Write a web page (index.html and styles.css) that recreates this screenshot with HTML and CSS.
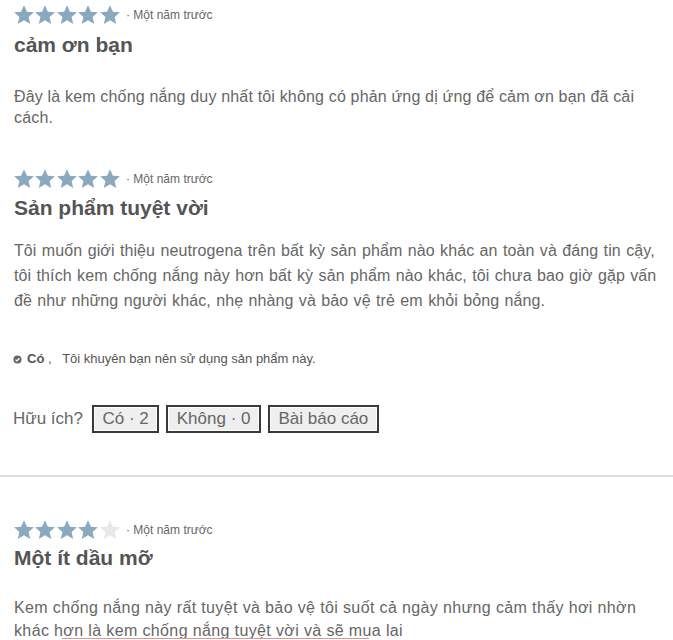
FILE: index.html
```html
<!DOCTYPE html>
<html lang="vi">
  <head>
    <meta charset="UTF-8">
    <title>Đánh giá sản phẩm</title>
    <link rel="stylesheet" href="styles.css">
  </head>
  <body>
    <svg width="0" height="0" class="defs">
      <defs>
        <path id="star" d="M11 1.2l2.9 6.5 7 .6-5.3 4.7 1.6 6.9L11 16.3l-6.2 3.6 1.6-6.9L1.1 8.3l7-.6z"/>
      </defs>
    </svg>

    <div class="review first">
      <div class="meta">
        <span class="stars">
          <svg class="star on"><use href="#star"/></svg><svg class="star on"><use href="#star"/></svg><svg class="star on"><use href="#star"/></svg><svg class="star on"><use href="#star"/></svg><svg class="star on"><use href="#star"/></svg>
        </span>
        <span class="date">· Một năm trước</span>
      </div>
      <h2 class="title">cảm ơn bạn</h2>
      <p class="text">Đây là kem chống nắng duy nhất tôi không có phản ứng dị ứng để cảm ơn bạn đã cải cách.</p>
    </div>

    <div class="review second">
      <div class="meta">
        <span class="stars">
          <svg class="star on"><use href="#star"/></svg><svg class="star on"><use href="#star"/></svg><svg class="star on"><use href="#star"/></svg><svg class="star on"><use href="#star"/></svg><svg class="star on"><use href="#star"/></svg>
        </span>
        <span class="date">· Một năm trước</span>
      </div>
      <h2 class="title">Sản phẩm tuyệt vời</h2>
      <p class="text">Tôi muốn giới thiệu neutrogena trên bất kỳ sản phẩm nào khác an toàn và đáng tin cậy, tôi thích kem chống nắng này hơn bất kỳ sản phẩm nào khác, tôi chưa bao giờ gặp vấn đề như những người khác, nhẹ nhàng và bảo vệ trẻ em khỏi bỏng nắng.</p>
      <p class="recommend">
        <svg class="check" viewBox="0 0 10 10"><circle cx="5" cy="5" r="4.5"/><path d="M2.8 5.1l1.5 1.5 2.9-3"/></svg>
        <b>Có</b>&nbsp;,&nbsp;&nbsp; Tôi khuyên bạn nên sử dụng sản phẩm này.
      </p>
      <div class="helpful">
        <span>Hữu ích?</span>
        <button>Có · 2</button>
        <button>Không · 0</button>
        <button>Bài báo cáo</button>
      </div>
    </div>

    <hr class="divider">

    <div class="review third">
      <div class="meta">
        <span class="stars">
          <svg class="star on"><use href="#star"/></svg><svg class="star on"><use href="#star"/></svg><svg class="star on"><use href="#star"/></svg><svg class="star on"><use href="#star"/></svg><svg class="star"><use href="#star"/></svg>
        </span>
        <span class="date">· Một năm trước</span>
      </div>
      <h2 class="title">Một ít dầu mỡ</h2>
      <p class="text">Kem chống nắng này rất tuyệt và bảo vệ tôi suốt cả ngày nhưng cảm thấy hơi nhờn khác hơn là kem chống nắng tuyệt vời và sẽ mua lai</p>
      <div class="more"></div>
    </div>
  </body>
</html>
```

FILE: styles.css
```css
body {
  font-family: "Liberation Sans", Arial, sans-serif;
  background-color: #fff;
  margin: 0;
  padding: 0 6px 0 13px;
  color: #666;
  overflow: hidden;
}
.defs {
  position: absolute;
}
.review {
  display: flex;
  flex-direction: column;
}
.first {
  padding-top: 4px;
}
.second {
  margin-top: 40px;
}
.third {
  margin-top: 42px;
}
.meta {
  display: flex;
  align-items: center;
  height: 22px;
}
.stars {
  display: flex;
}
.star {
  width: 22px;
  height: 22px;
  fill: #e8e8e8;
  margin-right: -0.6px;
}
.star.on {
  fill: #8aa8be;
}
.date {
  font-size: 12px;
  color: #666;
  margin-left: 6px;
}
.title {
  font-size: 21px;
  line-height: 26px;
  font-weight: bold;
  color: #555;
  margin: 6px 0 0 1px;
}
.text {
  font-size: 16px;
  line-height: 21px;
  letter-spacing: 0.17px;
  margin: 28px 0 0 1px;
}
.second .title {
  margin-top: 5px;
}
.second .text {
  line-height: 25px;
  letter-spacing: 0.1px;
  word-spacing: 0.8px;
  margin-top: 17px;
}
.third .title {
  margin-top: 4px;
}
.third .text {
  line-height: 23px;
  letter-spacing: 0.37px;
  margin-top: 25px;
}
.recommend {
  display: flex;
  align-items: center;
  font-size: 13px;
  line-height: 16px;
  margin: 38px 0 0 0;
  color: #555;
}
.recommend b {
  margin-left: 5px;
}
.check {
  width: 9px;
  height: 9px;
}
.check circle {
  fill: #666;
}
.check path {
  fill: none;
  stroke: #fff;
  stroke-width: 1.4;
}
.helpful {
  display: flex;
  align-items: center;
  gap: 7px;
  margin-top: 38px;
  font-size: 17px;
}
.helpful span {
  margin-right: 2px;
}
.helpful button {
  font-family: inherit;
  font-size: 17px;
  color: #666;
  background-color: #efefef;
  border: 2px solid #3a3a3a;
  box-shadow: inset 0 0 0 1px #fff;
  height: 28px;
  padding: 0 8.5px;
}
.divider {
  border: 0;
  border-top: 2px solid #ddd;
  margin: 42px -6px 0 -13px;
}
.more {
  margin: -4px 0 0 49px;
  width: 307px;
  border-top: 1px solid #d49a9a;
}
```
